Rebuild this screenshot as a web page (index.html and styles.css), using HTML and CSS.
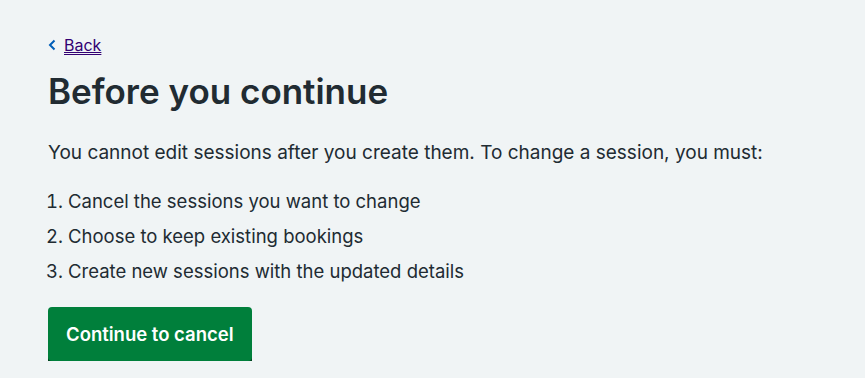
FILE: index.html
```html
<!DOCTYPE html>
<html lang="en">
<head>
<meta charset="UTF-8" />
<meta name="viewport" content="width=device-width, initial-scale=1" />
<title>Before you continue</title>
<link rel="stylesheet" href="styles.css">
</head>
<body>

<div class="container">
  <a class="back-link" href="#">
    <svg class="back-icon" viewBox="0 0 8 12" aria-hidden="true"><path d="M6.5 1.5L2 6l4.5 4.5" /></svg>
    <span>Back</span>
  </a>

  <h1>Before you continue</h1>

  <p>You cannot edit sessions after you create them. To change a session, you must:</p>

  <ol class="steps">
    <li>Cancel the sessions you want to change</li>
    <li>Choose to keep existing bookings</li>
    <li>Create new sessions with the updated details</li>
  </ol>

  <button class="button">Continue to cancel</button>
</div>

</body>
</html>
```

FILE: styles.css
```css
body {
  margin: 0;
  background: #f0f4f5;
  color: #212b32;
  font-family: Inter, "Noto Sans", Arial, sans-serif;
}
.container {
  padding: 33px 48px 0;
}
.back-link {
  display: inline-flex;
  align-items: center;
  gap: 8px;
  color: #330072;
  font-size: 16px;
  line-height: 24px;
}
.back-link span {
  text-decoration: underline;
  text-underline-offset: 3px;
}
.back-icon {
  width: 8px;
  height: 12px;
  fill: none;
  stroke: #005eb8;
  stroke-width: 2;
}
h1 {
  font-size: 35px;
  font-weight: 600;
  line-height: 44px;
  margin: 12px 0 26px;
}
p {
  font-size: 19px;
  line-height: 28px;
  margin: 0 0 20px;
}
.steps {
  margin: 0 0 22px;
  padding-left: 20px;
  font-size: 18.5px;
  line-height: 28px;
}
.steps li {
  margin-bottom: 7px;
}
.button {
  font-family: inherit;
  font-size: 18.5px;
  font-weight: 600;
  line-height: 24px;
  color: #fff;
  background: #007f3b;
  border: none;
  border-radius: 4px;
  padding: 15px 18px;
  box-shadow: 0 4px 0 #00401e;
  cursor: pointer;
}
```
